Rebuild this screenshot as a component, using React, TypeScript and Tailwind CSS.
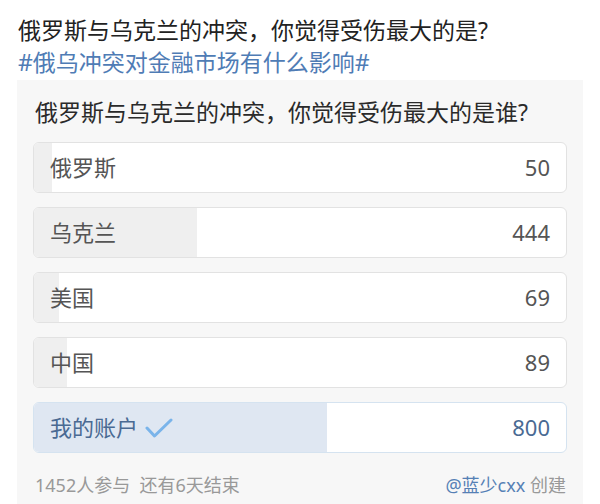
const options = [
  { label: '俄罗斯', votes: 50 },
  { label: '乌克兰', votes: 444 },
  { label: '美国', votes: 69 },
  { label: '中国', votes: 89 },
  { label: '我的账户', votes: 800, mine: true },
];

const total = options.reduce((s, o) => s + o.votes, 0);

function Check() {
  return (
    <svg width="28" height="22" viewBox="0 0 28 22" className="ml-[7px]">
      <path
        d="M2 11 L9.5 19 L26 3"
        fill="none"
        stroke="#7ab4ea"
        strokeWidth="3"
        strokeLinecap="round"
        strokeLinejoin="round"
      />
    </svg>
  );
}

export default function App() {
  return (
    <div
      className="w-[600px] h-[504px] overflow-hidden bg-white"
      style={{ fontFamily: '"Noto Sans", "Noto Sans CJK SC", sans-serif' }}
    >
      <div className="pt-[14px] pl-[18px]">
        <p className="text-[23px] leading-[32px] text-[#222]">俄罗斯与乌克兰的冲突，你觉得受伤最大的是?</p>
        <p className="text-[23px] leading-[32px] text-[#4f7cb5]">#俄乌冲突对金融市场有什么影响#</p>
      </div>

      <div className="mt-[2px] mx-[17px] bg-[#f7f7f7] px-[16px] pt-[16px] pb-[20px]">
        <p className="pl-[2px] text-[23px] leading-[32px] text-[#2a2a2a]">俄罗斯与乌克兰的冲突，你觉得受伤最大的是谁?</p>

        <div className="mt-[14px] flex flex-col gap-[14px]">
          {options.map((o) => (
            <div
              key={o.label}
              className={
                'relative h-[51px] rounded-[6px] border overflow-hidden ' +
                (o.mine ? 'bg-white border-[#d5e3f0]' : 'bg-white border-[#e2e2e2]')
              }
            >
              <div
                className={'absolute left-0 top-0 bottom-0 ' + (o.mine ? 'bg-[#dfe7f2]' : 'bg-[#efefef]')}
                style={{ width: `${(o.votes / total) * 100}%` }}
              />
              <div className="relative h-full flex items-center justify-between pl-[16px] pr-[16px]">
                <span className={'flex items-center text-[22px] ' + (o.mine ? 'text-[#4a6a93]' : 'text-[#555]')}>
                  {o.label}
                  {o.mine && <Check />}
                </span>
                <span className={'text-[22px] ' + (o.mine ? 'text-[#4a6a93]' : 'text-[#555]')}>{o.votes}</span>
              </div>
            </div>
          ))}
        </div>

        <div className="mt-[20px] flex items-center justify-between leading-[24px] text-[18px] text-[#999]">
          <span className="pl-[2px]">1452人参与&nbsp;&nbsp;还有6天结束</span>
          <span className="pr-[1px]">
            <span className="text-[#5580b5]">@蓝少cxx</span> 创建
          </span>
        </div>
      </div>
    </div>
  );
}
